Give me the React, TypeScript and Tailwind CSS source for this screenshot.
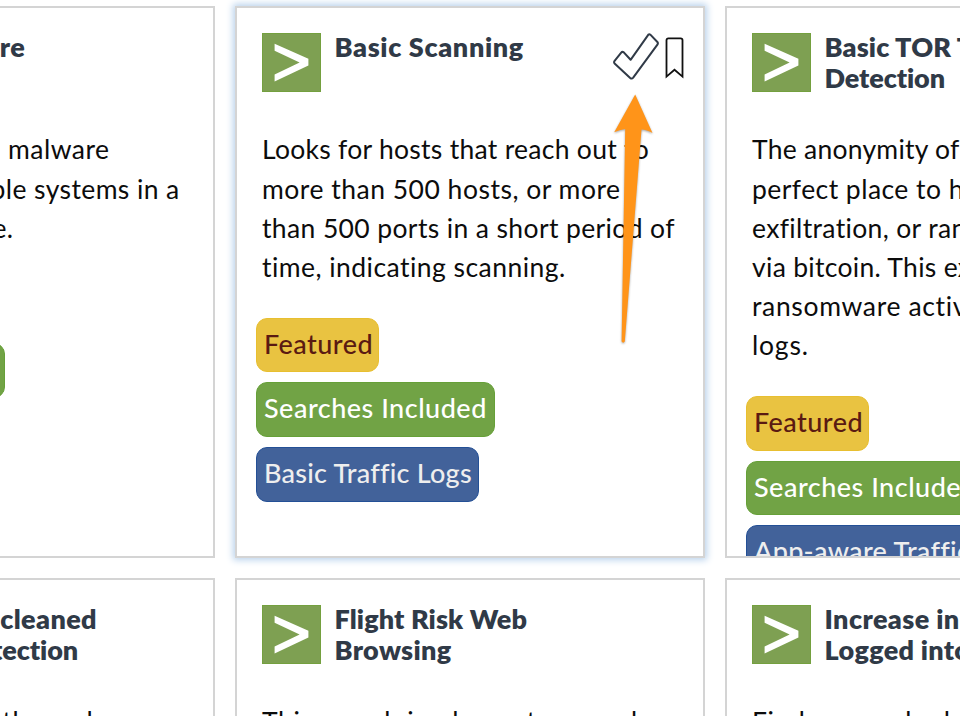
import type { ReactNode } from "react";

type Line = [text: string, tracking: string];
type Tag = "featured" | "searches" | "basic" | "app";

function Logo() {
  return (
    <svg className="mt-[25px] h-[59px] w-[59px] shrink-0" viewBox="0 0 59 59">
      <rect width="59" height="59" fill="#7ea052" />
      <rect x="0.5" y="0.5" width="58" height="58" fill="none" stroke="#74a03f" />
      <path d="M12.6 10.7 L46.4 25.8 V32.6 L12.6 48.6 V41.4 L37.6 29.4 L12.6 17.8 Z" fill="#fff" />
    </svg>
  );
}

function CheckOutline() {
  return (
    <svg className="mt-[25px] -ml-[0.5px] h-[48px] w-[47px]" viewBox="0 0 47 48" fill="none" stroke="#303a47" strokeWidth="2" strokeLinejoin="round">
      <path d="M35.4 1.6 Q36.4 0.8 37.6 1.9 L44.4 9 Q45.4 10.2 44.4 11.6 L20.2 44.6 Q18.8 46.3 17.2 45 L1.6 30.4 Q0.6 29.2 1.6 27.9 L8.2 19.6 Q9.3 18.3 10.8 19.4 L17.6 26.8 Z" />
    </svg>
  );
}

function BookmarkOutline() {
  return (
    <svg className="mt-[29px] ml-[5.5px] h-[42px] w-[20px]" viewBox="0 0 20 42" fill="none" stroke="#111" strokeWidth="1.8">
      <path d="M1.5 39.6 V3.2 Q1.5 1.3 3.4 1.3 H15.6 Q17.5 1.3 17.5 3.2 V39.6 L9.5 32.8 Z" />
    </svg>
  );
}

const tagStyle: Record<Tag, { box: string; text: string; label: string }> = {
  featured: { box: "w-[123.4px] bg-[#e9c341] border-[#e8bf30] text-[#5a1a12]", text: "tracking-[0.45px]", label: "Featured" },
  searches: { box: "w-[239px] bg-[#71a345] border-[#66a038] text-white", text: "tracking-[0.5px]", label: "Searches Included" },
  basic: { box: "w-[223px] bg-[#42629a] border-[#245096] text-[#eeeeee]", text: "tracking-[0.24px]", label: "Basic Traffic Logs" },
  app: { box: "w-[262px] bg-[#42629a] border-[#245096] text-[#eeeeee]", text: "tracking-[0.3px]", label: "App-aware Traffic Logs" },
};

function Badge({ kind }: { kind: Tag }) {
  const s = tagStyle[kind];
  return (
    <div className={`h-[54.6px] shrink-0 rounded-[11px] border pl-[7px] text-[27px] leading-[49.4px] font-medium whitespace-nowrap ${s.box}`}>
      <span className={s.text}>{s.label}</span>
    </div>
  );
}

function Card({ title, body, tags, active, actions }: { title: Line[]; body: Line[]; tags: Tag[]; active?: boolean; actions?: ReactNode }) {
  return (
    <article
      className={`h-[552px] w-[470px] overflow-hidden border-2 border-[#d4d4d4] bg-white pl-[25px] ${
        active ? "shadow-[0_0_7px_2px_#b9d2ec]" : ""
      }`}
    >
      <header className="flex h-[115.5px]">
        <Logo />
        <h2 className="mt-[23px] ml-[13.5px] w-[278.5px] text-[27px] leading-[31.3px] font-extrabold whitespace-nowrap text-[#303a47]">
          {title.map(([text, tracking]) => (
            <div key={text} className={tracking}>{text}</div>
          ))}
        </h2>
        {actions}
      </header>
      <div className="pt-[6.9px] text-[26.5px] leading-[39.2px] whitespace-nowrap text-[#0c0c0c]">
        {body.map(([text, tracking]) => (
          <div key={text} className={tracking}>{text}</div>
        ))}
      </div>
      <div className="mt-[30.3px] -ml-[6px] flex flex-col items-start gap-[10.2px]">
        {tags.map((t) => (
          <Badge key={t} kind={t} />
        ))}
      </div>
    </article>
  );
}

export default function App() {
  return (
    <main className="relative h-[716px] w-[960px] overflow-hidden bg-white font-['Lato','Liberation_Sans',sans-serif]">
      <div className="-ml-[255px] grid w-[1450px] grid-cols-[470px_470px_470px] gap-5 pt-[6px]">
        <Card
          title={[["Basic Malware", "tracking-[0.22px]"], ["Outbreak", "tracking-[0.3px]"]]}
          body={[
            ["Looks for the same malware", "tracking-[0.5px]"],
            ["occurring on multiple systems in a", "tracking-[0.41px]"],
            ["short period of time.", "tracking-[0.2px]"],
          ]}
          tags={["featured", "searches"]}
        />
        <Card
          active
          title={[["Basic Scanning", "tracking-[0.65px]"]]}
          body={[
            ["Looks for hosts that reach out to", "tracking-[0.28px]"],
            ["more than 500 hosts, or more", "tracking-[0.5px]"],
            ["than 500 ports in a short period of", "tracking-[0.37px]"],
            ["time, indicating scanning.", "tracking-[0.46px]"],
          ]}
          tags={["featured", "searches", "basic"]}
          actions={
            <>
              <CheckOutline />
              <BookmarkOutline />
            </>
          }
        />
        <Card
          title={[["Basic TOR Traffic", "tracking-[0.15px]"], ["Detection", "tracking-[-0.1px]"]]}
          body={[
            ["The anonymity of TOR makes it the", "tracking-[0.25px]"],
            ["perfect place to hide C&C,", "tracking-[0.45px]"],
            ["exfiltration, or ransomware payment", "tracking-[0.35px]"],
            ["via bitcoin. This example looks for", "tracking-[0.3px]"],
            ["ransomware activity based on FW", "tracking-[0.65px]"],
            ["logs.", "tracking-[0.8px]"],
          ]}
          tags={["featured", "searches", "app"]}
        />
        <Card
          title={[["Endpoint Uncleaned", "tracking-[0.38px]"], ["Malware Detection", "tracking-[-0.06px]"]]}
          body={[["Finds cases where the malware", "tracking-[0.7px]"]]}
          tags={[]}
        />
        <Card
          title={[["Flight Risk Web", "tracking-[0.12px]"], ["Browsing", "tracking-[0.35px]"]]}
          body={[["This search implements a number", "tracking-[0.7px]"]]}
          tags={[]}
        />
        <Card
          title={[["Increase in # of Hosts", "tracking-[0.4px]"], ["Logged into", "tracking-[0.3px]"]]}
          body={[["Find users who log", "tracking-[0.6px]"]]}
          tags={[]}
        />
      </div>
      <svg className="absolute top-[88px] left-[605px] h-[262px] w-[60px] drop-shadow-[0_1px_1px_rgba(0,0,0,0.35)]" viewBox="605 88 60 262">
        <path d="M635.2 94.5 L652.5 133 Q646.5 129.6 641.5 129.5 L624.8 341.5 Q623.2 343.8 621.6 341.5 L625.2 129 Q619.5 129.8 614.2 132.3 Z" fill="#ff9419" />
      </svg>
    </main>
  );
}
